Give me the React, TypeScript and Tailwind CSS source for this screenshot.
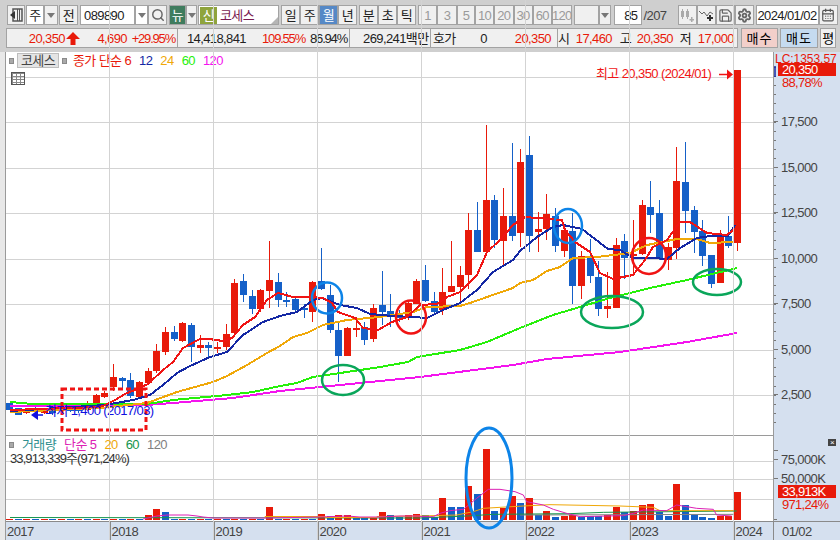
import { CalendarDays, Save, Search, Settings } from "lucide-react";
import type { ReactNode } from "react";

const RED = "#e81a0a";
const BLUE = "#1560c8";

// top, bottom, high, low, colour
type Candle = [number, number, number, number, "r" | "b"];
const candles: Candle[] = [
  [403, 410, 403, 410, "b"], [408, 415, 408, 415, "b"], [411, 412, 409, 414, "r"], [410, 412, 407, 415, "b"],
  [411, 413, 408, 414, "r"], [410, 413, 406, 415, "b"], [409, 411, 402, 413, "r"], [408, 411, 406, 412, "b"],
  [408, 411, 405, 413, "b"], [405, 410, 401, 411, "r"], [395, 407, 394, 408, "r"], [393, 397, 391, 398, "r"],
  [377, 387, 364, 391, "r"], [378, 381, 377, 390, "b"], [380, 396, 373, 398, "b"], [382, 397, 381, 398, "r"],
  [371, 383, 368, 384, "r"], [351, 371, 344, 373, "r"], [332, 352, 327, 355, "r"], [332, 339, 326, 341, "b"],
  [323, 341, 322, 342, "r"], [325, 347, 323, 362, "b"], [345, 348, 335, 353, "r"], [345, 348, 342, 357, "b"],
  [347, 349, 342, 353, "r"], [334, 347, 324, 350, "r"], [283, 333, 279, 335, "r"], [281, 295, 274, 302, "b"],
  [296, 309, 290, 314, "b"], [290, 309, 289, 312, "r"], [280, 291, 241, 308, "r"], [282, 300, 273, 307, "b"],
  [300, 302, 292, 307, "b"], [299, 310, 296, 311, "b"], [308, 310, 304, 318, "b"], [282, 312, 281, 322, "r"],
  [281, 289, 248, 290, "b"], [295, 330, 285, 333, "b"], [330, 356, 321, 382, "b"], [328, 356, 327, 356, "r"],
  [328, 330, 317, 337, "r"], [327, 340, 322, 345, "b"], [308, 339, 304, 342, "r"], [305, 312, 271, 325, "b"],
  [311, 316, 294, 327, "b"], [313, 318, 310, 322, "b"], [303, 318, 300, 320, "r"], [281, 304, 279, 304, "r"],
  [280, 301, 265, 302, "b"], [301, 312, 292, 313, "b"], [292, 310, 268, 315, "r"], [286, 292, 241, 292, "r"],
  [275, 287, 266, 302, "r"], [230, 275, 213, 289, "r"], [230, 252, 202, 252, "b"], [200, 252, 125, 255, "r"],
  [200, 240, 195, 248, "b"], [216, 241, 188, 265, "r"], [216, 236, 143, 241, "b"], [162, 233, 149, 247, "r"],
  [155, 236, 136, 252, "b"], [229, 232, 212, 252, "r"], [214, 229, 194, 240, "r"], [216, 246, 208, 252, "b"],
  [230, 251, 227, 257, "r"], [231, 286, 213, 304, "b"], [256, 286, 251, 299, "r"], [256, 276, 239, 283, "b"],
  [277, 309, 261, 316, "b"], [306, 309, 272, 318, "r"], [245, 308, 238, 308, "r"], [241, 258, 234, 279, "b"],
  [254, 255, 220, 273, "r"], [205, 254, 200, 255, "r"], [207, 215, 181, 233, "b"], [213, 259, 200, 260, "b"],
  [247, 260, 243, 270, "r"], [181, 248, 147, 259, "r"], [182, 211, 142, 233, "b"], [210, 232, 206, 253, "b"],
  [231, 256, 220, 266, "b"], [255, 284, 255, 288, "b"], [236, 283, 230, 283, "r"], [236, 246, 216, 248, "b"],
  [70, 243, 70, 251, "r"],
];

const ma6 = "10,410 100,407 105,405 115,400 125,394 137,389 148,384 163,370 173,362 183,348 200,339 209,339 223,341 232,338 243,325 255,317 267,300 278,293 282,294 293,297 310,297 323,298 332,303 338,312 355,318 363,328 378,330 392,322 407,317 420,305 437,304 447,297 460,292 477,275 487,252 500,240 513,225 525,217 537,218 562,220 565,230 575,242 590,252 600,273 613,279 633,275 645,260 653,247 667,240 680,222 690,222 707,233 727,235 733,230";
const ma12 = "10,411 105,405 133,400 150,395 163,385 177,373 190,366 210,357 227,352 243,335 263,322 280,316 297,312 313,300 322,298 340,305 357,308 370,314 393,316 413,317 427,318 443,310 460,303 477,290 493,272 513,260 520,251 537,237 553,227 563,225 582,229 608,249 620,250 633,258 653,258 667,259 680,248 697,238 710,236 728,236 735,225";
const ma24 = "10,412 100,408 147,403 177,392 213,382 227,376 247,365 267,353 280,346 293,337 307,333 323,325 347,320 380,317 413,312 427,307 460,306 470,303 487,297 513,288 520,283 533,280 547,271 560,267 573,258 597,257 630,253 647,245 677,239 697,239 710,243 733,242";
const ma60 = "10,402 33,404 147,404 173,400 227,395 253,392 280,386 297,383 313,377 347,372 380,367 408,362 417,357 460,350 487,342 520,328 553,315 610,298 650,288 687,280 737,268";
const ma120 = "10,406 147,405 173,403 233,398 280,391 360,383 420,377 513,365 547,359 620,352 687,342 737,333";

const volSpecial: Record<number, [number, "r" | "b"]> = {
  16: [515, "r"], 17: [509, "r"], 18: [512, "b"], 30: [507, "r"], 36: [514, "r"], 37: [516, "b"], 38: [515, "r"],
  39: [515, "r"], 40: [517, "b"], 41: [517, "b"], 42: [517, "r"], 43: [512, "r"], 44: [515, "b"], 45: [517, "b"],
  46: [515, "r"], 47: [514, "r"], 48: [515, "b"], 49: [517, "b"], 50: [498, "r"], 51: [507, "b"], 52: [507, "b"],
  53: [486, "r"], 54: [494, "b"], 55: [449, "r"], 56: [511, "b"], 57: [508, "r"], 58: [496, "r"], 59: [503, "b"],
  60: [498, "r"], 61: [515, "b"], 62: [511, "r"], 63: [517, "b"], 64: [516, "r"], 65: [515, "r"], 66: [517, "b"],
  67: [516, "b"], 68: [516, "b"], 69: [515, "r"], 70: [507, "r"], 71: [512, "b"], 72: [511, "r"], 73: [505, "r"],
  74: [504, "r"], 75: [512, "b"], 76: [516, "b"], 77: [484, "r"], 78: [505, "b"], 79: [515, "b"], 80: [517, "b"],
  81: [518, "b"], 82: [516, "r"], 83: [516, "r"], 84: [492, "r"],
};

const z7 = (pts: number[][]) => pts.map(([x, y]) => `${420 + x / 3},${420 + y / 3}`).join(" ");
const volMagenta = "143,519 157,516 167,515 188,515 197,516 203,517 213,518 266,518 320,517 347,516 360,517 380,517 400,516 420,516 " +
  z7([[0, 290], [40, 290], [60, 280], [90, 272], [130, 268], [170, 235], [205, 208], [240, 208], [285, 215], [310, 225], [320, 245], [370, 255], [400, 268], [440, 280], [480, 290], [560, 288], [610, 287], [640, 280], [670, 270], [740, 272], [770, 255], [830, 265], [880, 268], [890, 285], [935, 288]]);
const volOrange = "265,518 265,516.5 325,516.5 325,517.5 377,517.5 377,516.5 420,516 " +
  z7([[110, 285], [160, 275], [190, 265], [240, 262], [310, 258], [390, 254], [600, 258], [700, 262], [720, 272], [940, 272]]);
const volGreen = "10,517.5 420,518 " + z7([[140, 288], [220, 283], [450, 281], [550, 277], [950, 273]]);
const volGray = z7([[300, 285], [940, 283]]);

const cx = (i: number) => 9.5 + i * 8.667;

function Grid({ ys }: { ys: number[] }) {
  return (
    <g stroke="#d3d3d3" strokeWidth="1" shapeRendering="crispEdges">
      {ys.map((y) => <line key={y} x1="6" x2="773" y1={y} y2={y} />)}
      {[109.5, 213.5, 317.5, 421.5, 525.5, 629.5, 733.5].map((x) => <line key={x} x1={x} x2={x} y1="0" y2="540" />)}
    </g>
  );
}

function PriceChart() {
  return (
    <svg width="767" height="383" viewBox="6 52 767 383" className="block">
      <Grid ys={[77.5, 122.5, 168.5, 213.5, 259.5, 304.5, 350.5, 395.5]} />
      {candles.map(([top, bottom, high, low, c], i) => {
        const color = c === "r" ? RED : BLUE;
        const x = cx(i);
        return (
          <g key={i} shapeRendering="crispEdges">
            <line x1={x} x2={x} y1={high} y2={low} stroke={color} strokeWidth="1" />
            <rect x={x - 3.5} y={top} width="7" height={Math.max(bottom - top, 1.5)} fill={color} />
          </g>
        );
      })}
      <g fill="none" strokeWidth="2" strokeLinejoin="round" shapeRendering="crispEdges">
        <polyline points={ma120} stroke="#f414ee" />
        <polyline points={ma60} stroke="#26f00a" />
        <polyline points={ma24} stroke="#f0a808" />
        <polyline points={ma12} stroke="#1428a4" />
        <polyline points={ma6} stroke="#f01414" />
      </g>
      <rect x="62" y="389" width="84" height="41" fill="none" stroke="#f01414" strokeWidth="3" strokeDasharray="5 3" />
      <g fill="none" strokeWidth="2.5">
        <ellipse cx="327" cy="298" rx="15" ry="15.5" stroke="#0d84e8" />
        <ellipse cx="568" cy="226" rx="14" ry="17" stroke="#0d84e8" />
        <ellipse cx="411" cy="317" rx="15" ry="16.5" stroke="#f01414" />
        <ellipse cx="649" cy="256" rx="17" ry="18" stroke="#f01414" />
        <ellipse cx="343" cy="380" rx="21" ry="15" stroke="#0aa65a" />
        <ellipse cx="612" cy="312" rx="31" ry="16" stroke="#0aa65a" />
        <ellipse cx="717" cy="282" rx="24" ry="13" stroke="#0aa65a" />
      </g>
      <path d="M719 74.5h8" stroke="#f01414" strokeWidth="1.5" />
      <path d="M727 69.5l6 5-6 5z" fill="#f01414" />
      <path d="M31 415l7-5v10z" fill="#1010e0" />
      <path d="M36 415h7" stroke="#1010e0" strokeWidth="1.5" />
    </svg>
  );
}

function VolumeChart() {
  return (
    <svg width="767" height="85" viewBox="6 436 767 85" className="block overflow-visible">
      <Grid ys={[461.5, 479.5, 499.5]} />
      {candles.map((_, i) => {
        const s = volSpecial[i];
        const top = s ? s[0] : 518.5;
        const color = (s ? s[1] : i % 2 ? "b" : "r") === "r" ? RED : BLUE;
        return <rect key={i} x={cx(i) - 3.5} y={top} width="7" height={520 - top} fill={color} shapeRendering="crispEdges" />;
      })}
      <g fill="none" strokeWidth="1">
        <polyline points={volGray} stroke="#808080" />
        <polyline points={volGreen} stroke="#16954c" />
        <polyline points={volOrange} stroke="#f0a808" />
        <polyline points={volMagenta} stroke="#dc20b4" />
      </g>
      <ellipse cx="489" cy="478" rx="23" ry="50" fill="none" stroke="#0d84e8" strokeWidth="3" />
    </svg>
  );
}

function PriceAxis() {
  const ticks = Array.from({ length: 40 }, (_, i) => 67.5 + i * 9.1);
  const labels: [string, number][] = [["17,500", 121], ["15,000", 167], ["12,500", 212], ["10,000", 258], ["7,500", 303], ["5,000", 349], ["2,500", 394]];
  return (
    <svg width="67" height="469" viewBox="773 52 67 469" className="block">
      <line x1="773.500" x2="773.500" y1="52" y2="521" stroke="#9a9a9a" />
      <g stroke="#777" strokeWidth="1" shapeRendering="crispEdges">
        {ticks.map((y) => <line key={y} x1="774" x2="776" y1={y} y2={y} />)}
        {labels.map(([, y]) => <line key={y} x1="774" x2="778" y1={y + 0.5} y2={y + 0.5} />)}
        <line x1="774" x2="778" y1="450.500" y2="450.500" />
        <line x1="774" x2="778" y1="459.500" y2="459.500" />
        <line x1="774" x2="778" y1="478.500" y2="478.500" />
        <line x1="774" x2="777" y1="519.500" y2="519.500" />
      </g>
      <line x1="775" x2="775" y1="66" y2="77" stroke="#1428a4" strokeWidth="1.5" />
      <g fontSize="13" fill="#444" letterSpacing="-0.6">
        {labels.map(([t, y]) => <text key={t} x="781" y={y + 5}>{t}</text>)}
        <text x="781" y="464">75,000K</text>
        <text x="781" y="483">50,000K</text>
      </g>
      <g fontSize="13" letterSpacing="-0.7" fill={RED}>
        <text x="775" y="63" fontSize="12" textLength="61">LC:1353.57</text>
        <rect x="778" y="63" width="58" height="13" fill={RED} />
        <text x="782" y="74" fill="#fff">20,350</text>
        <text x="782" y="87">88,78%</text>
        <rect x="778" y="485" width="58" height="13" fill={RED} />
        <text x="782" y="496" fill="#fff">33,913K</text>
        <text x="782" y="509">971,24%</text>
      </g>
    </svg>
  );
}

function Btn({ w, on, dim, children }: { w: string; on?: boolean; dim?: boolean; children?: ReactNode }) {
  return (
    <div className={`${w} h-[20px] shrink-0 flex items-center justify-center border border-[#a3a3a3] ${on ? "bg-[#5588c6] text-white" : "bg-[#f0f0f0]"} ${dim ? "text-[#9a9a9a]" : ""}`}>
      {children}
    </div>
  );
}

function Caret() {
  return <div className="w-0 h-0 border-x-[4px] border-x-transparent border-t-[5px] border-t-[#777]" />;
}

function Square() {
  return <div className="w-[5px] h-[6px] bg-[#a9a9a9] border border-[#8a8a8a]" />;
}

function Toolbar() {
  return (
    <div className="flex pl-[7px] pt-[5px] h-[25px] text-[#222]">
      <Btn w="w-[18px]">
        <svg width="14" height="14" viewBox="0 0 14 14">
          <rect x="4" y="1" width="9" height="12" fill="none" stroke="#555" strokeWidth="1.5" />
          <rect x="8" y="1" width="1" height="12" fill="#555" />
          <rect x="10" y="1" width="1" height="12" fill="#555" />
          <path d="M6 3v8L1 7z" fill="#333" />
        </svg>
      </Btn>
      <div className="ml-[1px]"><Btn w="w-[18px] !bg-white">주</Btn></div>
      <Btn w="w-[14px]"><Caret /></Btn>
      <div className="ml-[1px]"><Btn w="w-[19px]">전</Btn></div>
      <div className="ml-[2px]"><Btn w="w-[55px] !bg-white !justify-start pl-[3px]">089890</Btn></div>
      <Btn w="w-[13px] !bg-white"><Caret /></Btn>
      <Btn w="w-[19px]"><Search size={14} strokeWidth={2.5} color="#666" /></Btn>
      <div className="ml-[2px]"><Btn w="w-[17px] !bg-[#3f7c5e] text-white">뉴</Btn></div>
      <Btn w="w-[11px]"><Caret /></Btn>
      <div className="ml-[1px] relative">
        <Btn w="w-[81px] !bg-white !justify-start">
          <span className="w-[17px] h-[17px] ml-[1px] bg-[#8fa43c] text-white flex items-center justify-center">신</span>
          <span className="ml-[3px] text-[#7a1a52]">코세스</span>
        </Btn>
        <div className="absolute right-[1px] bottom-[1px] w-0 h-0 border-l-[7px] border-l-transparent border-b-[7px] border-b-[#b5b5b5]" />
      </div>
      <div className="ml-[2px] flex">
        <Btn w="w-[19px]">일</Btn><Btn w="w-[19px]">주</Btn><Btn w="w-[19px]" on>월</Btn><Btn w="w-[19px]">년</Btn>
      </div>
      <div className="ml-[2px] flex">
        <Btn w="w-[19px]">분</Btn><Btn w="w-[19px]">초</Btn><Btn w="w-[19px]">틱</Btn>
      </div>
      <div className="ml-[2px] flex tracking-[-0.8px]">
        {["1", "3", "5", "10", "20", "30", "60", "120"].map((t) => <Btn key={t} w={t === "1" ? "w-[19px]" : t === "3" ? "w-[20px]" : t === "5" ? "w-[18px]" : t === "10" || t === "30" ? "w-[19px]" : "w-[19.500px]"} dim>{t}</Btn>)}
      </div>
      <div className="ml-[2px] flex">
        <Btn w="w-[25px]" dim /><Btn w="w-[12px]" dim><Caret /></Btn>
      </div>
      <div className="ml-[3px]"><Btn w="w-[28px] !bg-white !justify-end pr-[3px]">85</Btn></div>
      <div className="w-[36px] pl-[2px] h-[20px] flex items-center text-[#444]">/207</div>
      <Btn w="w-[19px]">
        <svg width="15" height="14" viewBox="0 0 15 14" fill="#aaa">
          <rect x="1" y="3" width="3" height="6" /><rect x="2" y="1" width="1" height="10" />
          <rect x="6" y="3" width="3" height="6" /><rect x="7" y="1" width="1" height="10" />
          <path d="M11 9h1.500v2H14v1.500h-1.500V14H11v-1.500H9.500V11H11z" />
        </svg>
      </Btn>
      <Btn w="w-[19px]">
        <svg width="16" height="14" viewBox="0 0 16 14" fill="none">
          <path d="M1 3l3 3 2-2 3 4 3-4 3 2" stroke="#666" strokeWidth="1" />
          <path d="M9 10h6M12 7v6" stroke="#333" strokeWidth="2" />
        </svg>
      </Btn>
      <Btn w="w-[19px]"><Save size={15} strokeWidth={2} color="#666" /></Btn>
      <Btn w="w-[19px]"><Settings size={15} strokeWidth={3} color="#666" /></Btn>
      <div className="ml-[2px]"><Btn w="w-[63px] !bg-white">2024/01/02</Btn></div>
      <Btn w="w-[19px]"><CalendarDays size={14} color="#555" /></Btn>
    </div>
  );
}

function Val({ w, red, right, children }: { w: string; red?: boolean; right?: boolean; children: ReactNode }) {
  return <span className={`${w} shrink-0 ${right ? "text-right" : ""} ${red ? "text-[#e81a0a]" : "text-[#222]"}`}>{children}</span>;
}

function InfoRow() {
  return (
    <div className="flex pl-[6px] mt-[3px] h-[20px]">
      <div className="w-[732px] flex items-center border border-[#a3a3a3] bg-[#f0f0f0] whitespace-nowrap">
        <div className="w-[171px] h-full flex items-center border-r border-[#a3a3a3]">
          <Val w="w-[58px]" red right>20,350</Val>
          <svg width="14" height="13" viewBox="0 0 14 13" className="ml-[1px]"><path d="M7 0l7 7H9.500v6h-5V7H0z" fill={RED} /></svg>
          <Val w="w-[47px]" red right>4,690</Val>
          <Val w="w-[48px] tracking-[-1.200px]" red right>+29.95%</Val>
        </div>
        <div className="w-[172px] h-full flex items-center border-r border-[#a3a3a3]">
          <Val w="w-[68px]" right>14,418,841</Val>
          <Val w="w-[59px] tracking-[-1.200px]" red right>109.55%</Val>
          <Val w="w-[42px] tracking-[-1.200px]" right>86.94%</Val>
        </div>
        <div className="w-[81px] h-full flex items-center border-r border-[#a3a3a3] pl-[13px]">
          <Val w="w-[68px]">269,241백만</Val>
        </div>
        <div className="w-[127px] h-full flex items-center border-r border-[#a3a3a3] pl-[2px]">
          <Val w="w-[26px]">호가</Val>
          <Val w="w-[28px]" right>0</Val>
          <Val w="w-[64px]" red right>20,350</Val>
        </div>
        <div className="flex-1 h-full flex items-center">
          <Val w="w-[10px]">시</Val>
          <Val w="w-[44px]" red right>17,460</Val>
          <Val w="w-[19px]" right>고</Val>
          <Val w="w-[42px]" red right>20,350</Val>
          <Val w="w-[18px]" right>저</Val>
          <Val w="w-[43px]" red right>17,000</Val>
        </div>
      </div>
      <div className="ml-[3px] w-[37px] h-[20px] flex items-center justify-center border border-[#a3a3a3] bg-[#f2cfca] tracking-[1px]">매수</div>
      <div className="ml-[2px] w-[38px] h-[20px] flex items-center justify-center border border-[#a3a3a3] bg-[#c5dbf0] tracking-[1px]">매도</div>
      <div className="ml-[2px] w-[16px] h-[20px] flex items-center justify-center border border-[#a3a3a3] bg-[#f0f0f0]">평</div>
    </div>
  );
}

function ChartLegend() {
  return (
    <div className="absolute left-[3px] top-[1px] flex items-center gap-[3px] h-[15px]">
      <Square />
      <div className="w-[42px] h-[15px] flex items-center justify-center bg-[#e4e4e4] border border-[#bdbdbd] text-[#444]">코세스</div>
      <Square />
      <div className="ml-[3px] flex gap-[8px]">
        <span className="text-[#e81a0a]">종가 단순 6</span>
        <span className="text-[#1428a4]">12</span>
        <span className="text-[#f0a808]">24</span>
        <span className="text-[#26f00a]">60</span>
        <span className="text-[#f414ee]">120</span>
      </div>
    </div>
  );
}

function App() {
  const years = ["2017", "2018", "2019", "2020", "2021", "2022", "2023", "2024"];
  return (
    <div className="w-[840px] h-[540px] overflow-hidden bg-[#cfcfcf] text-[13px] leading-none tracking-[-0.6px] font-['Liberation_Sans','Noto_Sans_CJK_KR',sans-serif]">
      <Toolbar />
      <InfoRow />
      <div className="flex mt-[4px] h-[488px] bg-[#e8e8e8] pl-[5px]">
        <div className="w-[768px] border-l border-[#9a9a9a] bg-white relative">
          <div className="relative">
            <PriceChart />
            <ChartLegend />
            <div className="absolute left-[5px] top-[20px] w-[14px] h-[13px] border border-[#555] bg-[linear-gradient(#888_1px,transparent_1px),linear-gradient(90deg,#888_1px,transparent_1px)] bg-[size:4px_3px]" />
            <div className="absolute left-[590px] top-[15px] text-[#f01414] whitespace-nowrap">최고 20,350 (2024/01)</div>
            <div className="absolute left-[39px] top-[352px] text-[#1010e0] whitespace-nowrap">최저 1,400 (2017/03)</div>
          </div>
          <div className="relative z-10 border-t border-[#9a9a9a]">
            <VolumeChart />
            <div className="absolute left-[3px] top-[2px] flex items-center gap-[8px] h-[13px]">
              <Square />
              <span className="text-[#2f8f8f]">거래량</span>
              <span className="text-[#dc20b4]">단순 5</span>
              <span className="text-[#f0a808]">20</span>
              <span className="text-[#16954c]">60</span>
              <span className="text-[#808080]">120</span>
            </div>
            <div className="absolute left-[4px] top-[16px] text-[#333] whitespace-nowrap tracking-[-0.9px]">33,913,339주(971,24%)</div>
          </div>
          <div className="flex h-[19px] border-t border-[#8a8a8a] bg-[#d5e0ef] text-[#444]">
            {years.map((y, i) => (
              <div key={y} className={`${i === 0 ? "w-[103.500px]" : i === 7 ? "flex-1" : "w-[104px]"} ${i ? "border-l border-[#8a8a8a]" : ""} pl-[1px] flex items-center`}>{y}</div>
            ))}
          </div>
        </div>
        <div className="w-[67px] bg-[#d5e0ef] relative">
          <PriceAxis />
          <div className="h-[19px] border-t border-l border-[#8a8a8a] flex items-center pl-[8px] text-[#444]">01/02</div>
          <div className="absolute left-[55px] top-[387px] w-[8px] h-[7px] bg-[#444] text-white text-[8px] leading-[7px] text-center">×</div>
        </div>
      </div>
    </div>
  );
}

export default App;
